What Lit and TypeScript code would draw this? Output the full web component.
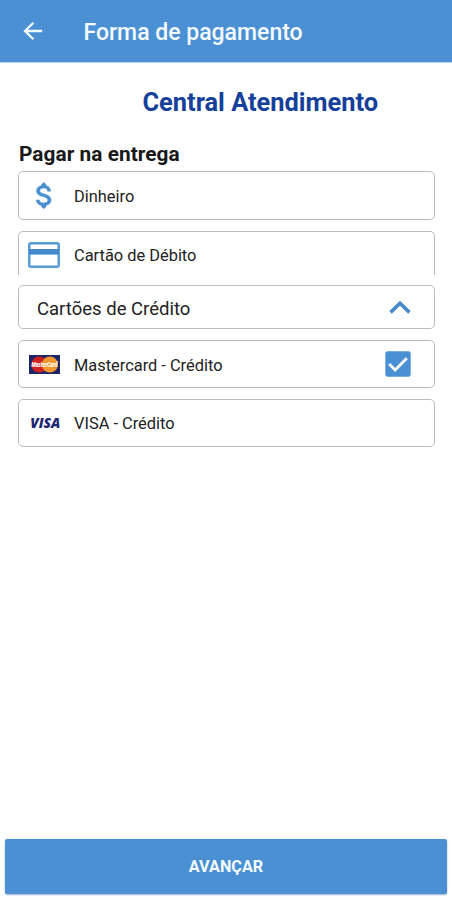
import { LitElement, html, css } from "lit";
import { customElement } from "lit/decorators.js";

const backIcon = html`<svg width="20" height="20" viewBox="0 0 20 20" fill="none" stroke="#f4fbff" stroke-width="2.3">
  <path d="M19.2 10H2.4M10.4 1.8L2 10l8.4 8.2" />
</svg>`;

const dollarIcon = html`<svg width="35" height="35" viewBox="0 0 24 24" fill="#4a90d0" stroke="#4a90d0" stroke-width=".3">
  <path d="M11.8 10.9c-2.27-.59-3-1.2-3-2.15 0-1.09 1.01-1.85 2.7-1.85 1.78 0 2.44.85 2.5 2.1h2.21c-.07-1.72-1.12-3.3-3.21-3.81V4.2L11.5 3 10 4.2v.96c-1.94.42-3.5 1.68-3.5 3.61 0 2.31 1.91 3.46 4.7 4.13 2.5.6 3 1.48 3 2.41 0 .69-.49 1.79-2.7 1.79-2.06 0-2.87-.92-2.98-2.1h-2.2c.12 2.19 1.76 3.42 3.68 3.83v.97l1.5 1.3 1.5-1.3v-.95c1.95-.37 3.5-1.5 3.5-3.55 0-2.84-2.43-3.81-4.7-4.4z" />
</svg>`;

const cardIcon = html`<svg width="32" height="26" viewBox="0 0 32 26">
  <rect x="1.3" y="1.3" width="29.4" height="23.4" rx="1.6" fill="#fff" stroke="#5a9ad6" stroke-width="2.5" />
  <rect x="1" y="7" width="30" height="5.6" fill="#438bca" />
</svg>`;

const mastercardIcon = html`<svg width="31" height="19" viewBox="0 0 31 19">
  <rect width="31" height="19" fill="#1d2468" />
  <circle cx="10.3" cy="9.5" r="8" fill="#d0201f" />
  <circle cx="20.9" cy="9.5" r="8" fill="#f0982c" />
  <text x="15.4" y="11.9" text-anchor="middle" textLength="26" lengthAdjust="spacingAndGlyphs"
    font-family="Roboto, sans-serif" font-size="6.4" font-weight="900" font-style="italic" fill="#fff">MasterCard</text>
</svg>`;

const visaIcon = html`<svg width="34" height="24" viewBox="0 0 34 24">
  <text x="3.2" y="16.9" textLength="30" lengthAdjust="spacingAndGlyphs"
    font-family="Open Sans, sans-serif" font-size="14" font-weight="800" font-style="italic" fill="#1c2672">VISA</text>
</svg>`;

const chevronUp = html`<svg width="22" height="14" viewBox="0 0 22 14" fill="none" stroke="#438bca" stroke-width="3.6">
  <path d="M1.6 12.4L11 3.2l9.4 9.2" />
</svg>`;

const checkIcon = html`<svg width="26" height="26" viewBox="0 0 26 26">
  <rect x=".3" y=".3" width="25.4" height="25.4" rx="2.2" fill="#4a90d5" />
  <path d="M4.2 13l5.9 6L21.8 7.2" fill="none" stroke="#fff" stroke-width="2.8" />
</svg>`;

@customElement("app-root")
export class AppRoot extends LitElement {
  static styles = css`
    :host {
      display: flex;
      flex-direction: column;
      box-sizing: border-box;
      height: 900px;
      background: #fff;
      font-family: Roboto, "Liberation Sans", sans-serif;
      color: #222;
    }
    svg { display: block; flex: none; overflow: visible; }
    header {
      height: 62px;
      flex: none;
      display: flex;
      align-items: center;
      padding-left: 23px;
      gap: 40.5px;
      background: #4a90d3;
      box-shadow: 0 1px 1px #bcd6ef;
      color: #f4fbff;
      font-size: 23px;
      font-weight: 500;
      white-space: nowrap;
    }
    .title { padding-top: 2px; }
    .store {
      margin: 25px 0 0 142.5px;
      font-size: 25.4px;
      line-height: 30px;
      font-weight: 700;
      color: #143f9a;
      white-space: nowrap;
    }
    h2 {
      margin: 25px 0 0 19px;
      font-size: 20.8px;
      line-height: 24px;
      letter-spacing: 0.06px;
      font-weight: 700;
      color: #181818;
    }
    .options {
      margin: 5px 17.5px 0 18px;
      display: flex;
      flex-direction: column;
      gap: 11px;
    }
    .row {
      box-sizing: border-box;
      height: 48px;
      display: flex;
      align-items: center;
      padding: 0 22.5px 0 9px;
      border: 1.4px solid #bdbdbd;
      border-radius: 5px;
      font-size: 16.4px;
    }
    .icon {
      width: 32px;
      display: flex;
      justify-content: center;
    }
    .label { margin-left: 14px; flex: 1; padding-top: 2px; }
    .cash { height: 49px; }
    .open {
      height: 44px;
      border-bottom: 0;
      border-radius: 5px 5px 0 0;
      padding-top: 3px;
    }
    .open .label { padding-top: 1px; }
    .group { height: 44px; margin-top: -1px; font-size: 18.5px; padding-left: 18px; }
    .group .label { margin-left: 0; padding-top: 3px; }
    .visa .label { padding-top: 1px; }
    button {
      margin: auto 5px 6px;
      height: 55px;
      flex: none;
      border: 0;
      border-radius: 2px;
      background: #4a90d3;
      box-shadow: 0 1px 2px #98afd0;
      color: #f4fbff;
      font: 700 16.2px Roboto, "Liberation Sans", sans-serif;
    }
  `;

  render() {
    return html`
      <header>${backIcon}<span class="title">Forma de pagamento</span></header>
      <div class="store">Central Atendimento</div>
      <h2>Pagar na entrega</h2>
      <div class="options">
        <div class="row cash"><span class="icon">${dollarIcon}</span><span class="label">Dinheiro</span></div>
        <div class="row open"><span class="icon">${cardIcon}</span><span class="label">Cartão de Débito</span></div>
        <div class="row group"><span class="label">Cartões de Crédito</span>${chevronUp}</div>
        <div class="row"><span class="icon">${mastercardIcon}</span><span class="label">Mastercard - Crédito</span>${checkIcon}</div>
        <div class="row visa"><span class="icon">${visaIcon}</span><span class="label">VISA - Crédito</span></div>
      </div>
      <button>AVANÇAR</button>
    `;
  }
}
